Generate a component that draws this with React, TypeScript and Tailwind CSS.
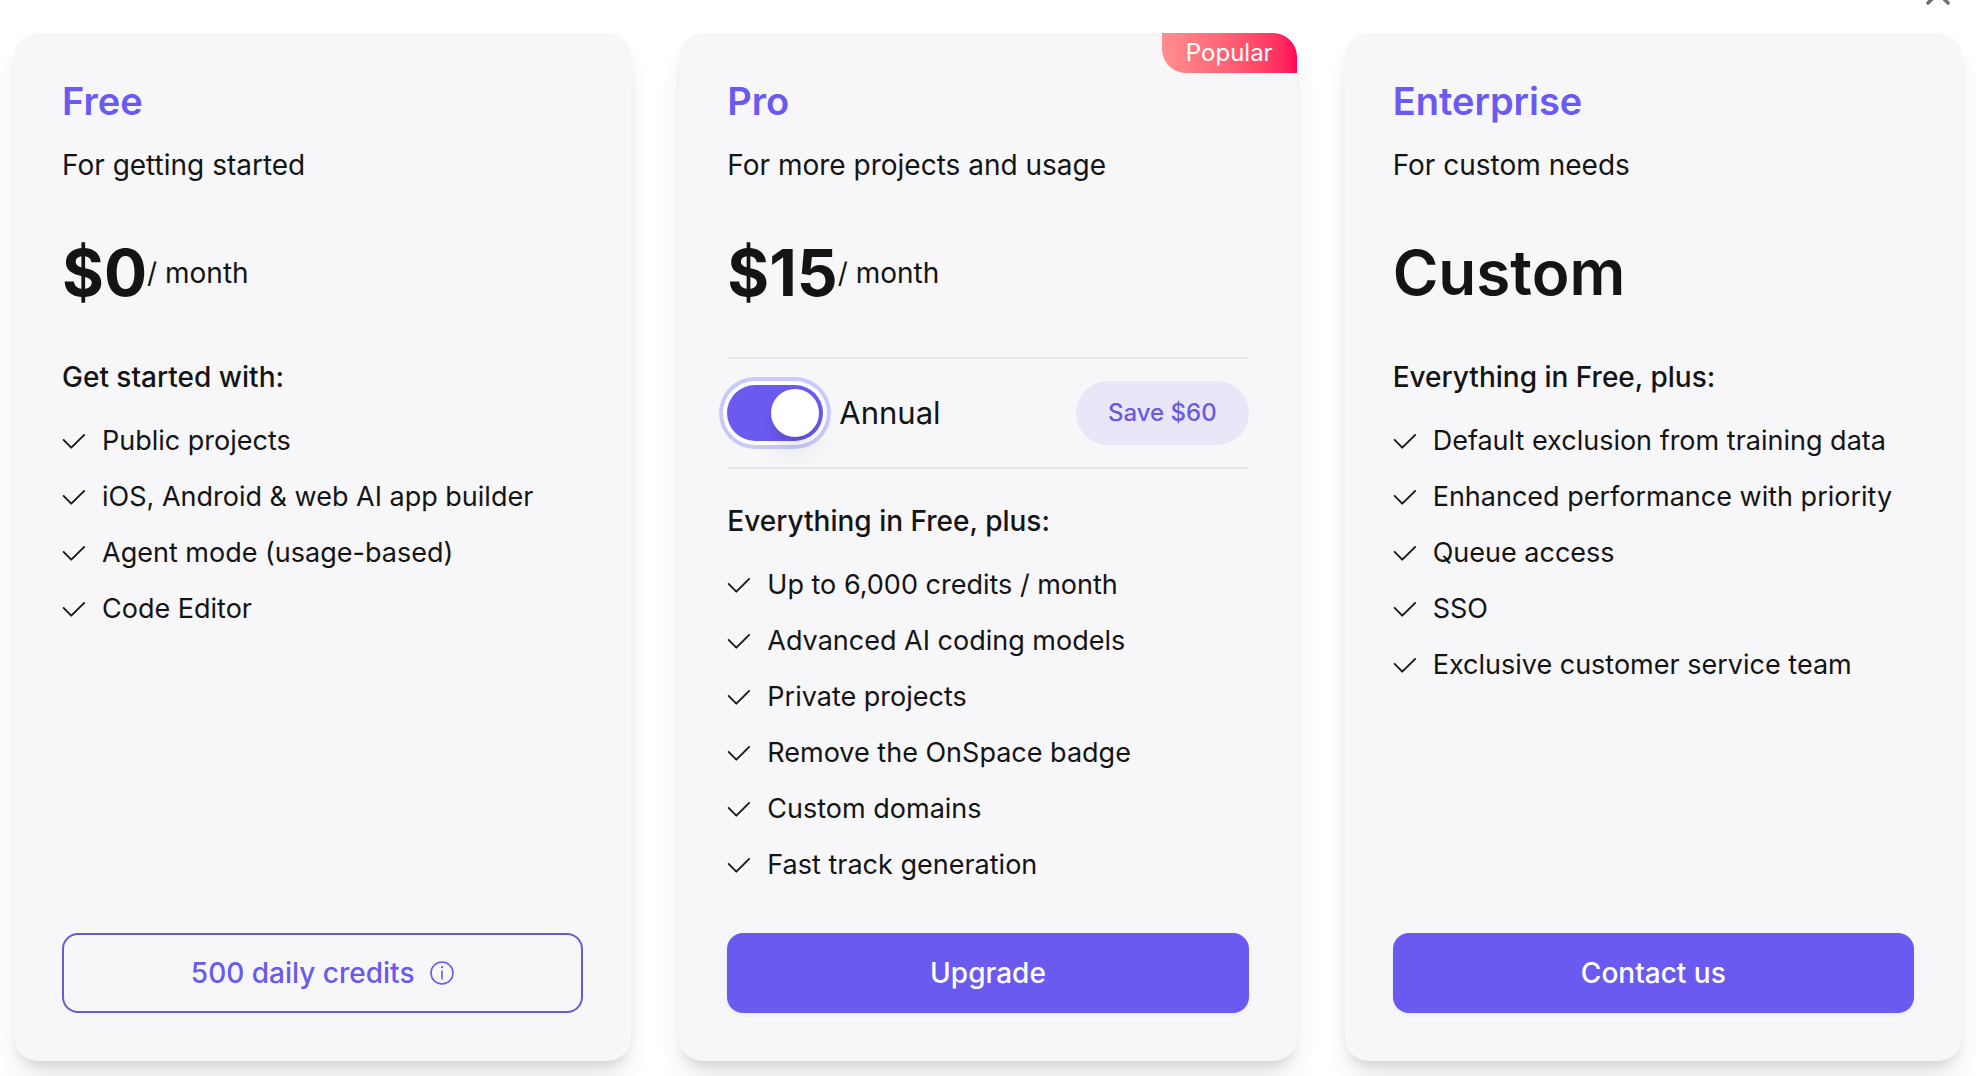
import { useState } from "react";
import type { ReactNode } from "react";

function CheckIcon() {
  return (
    <svg className="size-6 shrink-0" viewBox="0 0 24 24" fill="none" stroke="currentColor" strokeWidth="1.8" strokeLinecap="round" strokeLinejoin="round" aria-hidden="true">
      <path d="M1.6 10.9 L9.3 18.7 L22.2 5.9" />
    </svg>
  );
}

function InfoIcon() {
  return (
    <svg className="size-6 shrink-0" viewBox="0 0 24 24" fill="none" stroke="currentColor" strokeWidth="1.6" aria-hidden="true">
      <circle cx="12" cy="12" r="11" />
      <path d="M12 9.5V18.5" />
      <circle cx="12" cy="6.2" r="1.1" fill="currentColor" stroke="none" />
    </svg>
  );
}

type PlanProps = {
  name: string;
  tagline: string;
  price: string;
  period?: string;
  badge?: string;
  billing?: ReactNode;
  heading: string;
  features: string[];
  action: ReactNode;
};

function PlanCard({ name, tagline, price, period, badge, billing, heading, features, action }: PlanProps) {
  return (
    <section className="relative flex flex-col rounded-3xl bg-[#f7f7fa] p-12 shadow-[0_20px_30px_-6px_rgba(0,0,0,0.1),0_8px_12px_-4px_rgba(0,0,0,0.1)]">
      {badge && (
        <span className="absolute top-0 right-0 rounded-tr-3xl rounded-bl-3xl bg-linear-to-r from-[#ff8e8e] to-[#ff0059] px-6 text-2xl leading-10 text-white">
          {badge}
        </span>
      )}
      <h2 className="text-[38px] leading-10 font-semibold text-[#6a5af0]">{name}</h2>
      <p className="mt-6 text-[28px] leading-10">{tagline}</p>
      <div className="mt-14 flex items-center">
        <span className={period ? "text-[64px] leading-16 font-bold" : "text-[62px] leading-16 font-semibold"}>{price}</span>
        {period && <span className="text-[28px] leading-10">{period}</span>}
      </div>
      {billing}
      <h3 className={billing ? "mt-8 text-[28px] leading-10 font-medium" : "mt-13 text-[28px] leading-10 font-medium"}>{heading}</h3>
      <ul className="mt-6 mb-12 flex flex-col gap-4">
        {features.map((feature) => (
          <li key={feature} className="flex items-center gap-4 leading-10">
            <CheckIcon />
            {feature}
          </li>
        ))}
      </ul>
      {action}
    </section>
  );
}

function BillingToggle() {
  const [annual, setAnnual] = useState(true);
  return (
    <div className="mt-13 flex items-center justify-between border-y-2 border-[#e5e7eb] py-[22px]">
      <label className="flex items-center gap-4 text-[31px] leading-10">
        <input
          type="checkbox"
          role="switch"
          checked={annual}
          onChange={(e) => setAnnual(e.target.checked)}
          className="flex h-14 w-24 shrink-0 appearance-none items-center rounded-full bg-gray-300 p-1 ring-4 ring-[#c7cafb] ring-offset-4 ring-offset-white before:size-12 before:rounded-full before:bg-white before:shadow-[0_20px_30px_-6px_rgba(0,0,0,0.1),0_8px_12px_-4px_rgba(0,0,0,0.1)] checked:bg-[#6a5af0] checked:before:ml-10"
        />
        Annual
      </label>
      <span className="rounded-full bg-[#e9e7f7] px-8 text-2xl leading-16 font-medium text-[#6a5ae0]">Save $60</span>
    </div>
  );
}

const primaryButton =
  "mt-auto h-20 w-full rounded-2xl bg-[#6a5af0] text-[28px] font-medium text-white shadow-[0_2px_4px_rgba(0,0,0,0.05)]";

export default function App() {
  return (
    <main className="relative min-h-screen overflow-hidden bg-white px-3.5 pt-[33px] pb-[15px] font-['Inter',sans-serif] text-[27px] text-[#141414]">
      <button type="button" aria-label="Close" className="absolute -top-[23px] right-[22px] text-[#707070]">
        <svg className="size-8" viewBox="0 0 32 32" fill="none" stroke="currentColor" strokeWidth="3.6" strokeLinecap="round">
          <path d="M6 6 L26 26 M26 6 L6 26" />
        </svg>
      </button>
      <div className="grid grid-cols-3 gap-12">
        <PlanCard
          name="Free"
          tagline="For getting started"
          price="$0"
          period="/ month"
          heading="Get started with:"
          features={["Public projects", "iOS, Android & web AI app builder", "Agent mode (usage-based)", "Code Editor"]}
          action={
            <button type="button" className="mt-auto flex h-20 w-full items-center justify-center gap-4 rounded-2xl border-2 border-[#6a5ad4] text-[28px] font-medium text-[#6a5ae8]">
              500 daily credits
              <InfoIcon />
            </button>
          }
        />
        <PlanCard
          name="Pro"
          tagline="For more projects and usage"
          price="$15"
          period="/ month"
          badge="Popular"
          billing={<BillingToggle />}
          heading="Everything in Free, plus:"
          features={[
            "Up to 6,000 credits / month",
            "Advanced AI coding models",
            "Private projects",
            "Remove the OnSpace badge",
            "Custom domains",
            "Fast track generation",
          ]}
          action={<button type="button" className={primaryButton}>Upgrade</button>}
        />
        <PlanCard
          name="Enterprise"
          tagline="For custom needs"
          price="Custom"
          heading="Everything in Free, plus:"
          features={[
            "Default exclusion from training data",
            "Enhanced performance with priority",
            "Queue access",
            "SSO",
            "Exclusive customer service team",
          ]}
          action={<button type="button" className={primaryButton}>Contact us</button>}
        />
      </div>
    </main>
  );
}
